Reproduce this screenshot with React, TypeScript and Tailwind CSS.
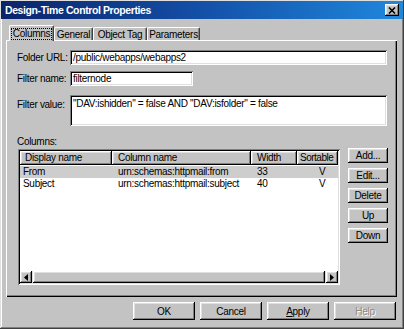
import React from "react";

// classic 3D edges
const raised =
  "shadow-[inset_-1px_-1px_#000,inset_1px_1px_#fff,inset_-2px_-2px_#808080,inset_2px_2px_#dfdfdf]";
const sunken =
  "shadow-[inset_1px_1px_#808080,inset_-1px_-1px_#fff,inset_2px_2px_#000,inset_-2px_-2px_#dfdfdf]";

const rows = [
  { display: "From", column: "urn:schemas:httpmail:from", width: "33", sortable: "V" },
  { display: "Subject", column: "urn:schemas:httpmail:subject", width: "40", sortable: "V" },
];

const headers = [
  { label: "Display name", pad: "pl-[5px]" },
  { label: "Column name", pad: "pl-[6px]" },
  { label: "Width", pad: "pl-[6px]" },
  { label: "Sortable", pad: "pl-[3px] tracking-[-0.5px]" },
];

const Tab: React.FC<{ label: string; w: string; active?: boolean }> = ({ label, w, active }) => (
  <div
    className={
      active
        ? `${w} h-[16px] -mb-[1px] bg-[#c3c3c3] border-l border-t border-white border-r border-r-[#404040] rounded-t-[2px] shadow-[inset_-1px_0_#808080] flex items-center justify-center`
        : `${w} h-[13px] bg-[#c3c3c3] border-l border-t border-white border-r border-r-[#404040] rounded-t-[2px] shadow-[inset_-1px_0_#808080] flex items-center justify-center`
    }
  >
    {active ? (
      <span className="border border-dotted border-black px-[1px] h-[12px] leading-[10px] flex items-center whitespace-nowrap">
        {label}
      </span>
    ) : (
      <span className="leading-[11px] whitespace-nowrap">{label}</span>
    )}
  </div>
);

const Button: React.FC<{ children: React.ReactNode; className?: string; disabled?: boolean }> = ({
  children,
  className,
  disabled,
}) => (
  <div
    className={`${raised} bg-[#c3c3c3] flex items-center justify-center ${className ?? ""} ${
      disabled ? "text-[#8a8a8a] [text-shadow:1px_1px_0_#fff]" : "text-black"
    }`}
  >
    {children}
  </div>
);

const Arrow: React.FC<{ dir: "left" | "right" }> = ({ dir }) => (
  <svg width="4" height="7" viewBox="0 0 4 7">
    {dir === "left" ? <polygon points="4,0 4,7 0,3.5" fill="#000" /> : <polygon points="0,0 0,7 4,3.5" fill="#000" />}
  </svg>
);

const ListView: React.FC = () => (
  <div className={`w-[322px] h-[136px] bg-white ${sunken} p-[2px] flex flex-col`}>
    {/* Header */}
    <div className="grid grid-cols-[92px_139px_46px_41px] h-[14px]">
      {headers.map((h) => (
        <div key={h.label} className={`${raised} bg-[#c3c3c3] leading-[14px] whitespace-nowrap ${h.pad}`}>
          {h.label}
        </div>
      ))}
    </div>

    {/* Rows */}
    <div className="flex-1 pt-[1px]">
      {rows.map((r, i) => (
        <div
          key={r.display}
          className={`grid grid-cols-[92px_139px_46px_41px] h-[12px] leading-[12px] ${
            i === 0 ? "bg-[#cdcdcd]" : ""
          }`}
        >
          <div className="pl-[3px]">{r.display}</div>
          <div className="pl-[6px] whitespace-nowrap">{r.column}</div>
          <div className="pl-[6px]">{r.width}</div>
          <div className="pl-[22px]">{r.sortable}</div>
        </div>
      ))}
    </div>

    {/* Horizontal scrollbar */}
    <div className="h-[12px] flex bg-[#dcdcdc]">
      <div className={`w-[12px] ${raised} bg-[#c3c3c3] flex items-center justify-center`}>
        <Arrow dir="left" />
      </div>
      <div className={`flex-1 ${raised} bg-[#c3c3c3] mx-[1px]`} />
      <div className={`w-[12px] ${raised} bg-[#c3c3c3] flex items-center justify-center`}>
        <Arrow dir="right" />
      </div>
    </div>
  </div>
);

export default function App() {
  return (
    <div
      className={`w-[404px] h-[329px] bg-[#c3c3c3] flex flex-col pt-[1px] px-[1px] font-['Liberation_Sans',Arial,sans-serif] text-[10px] tracking-[-0.3px] text-black shadow-[inset_-1px_-1px_#404040,inset_1px_1px_#dfdfdf,inset_-2px_-2px_#808080,inset_2px_2px_#fff]`}
    >
      {/* Title bar */}
      <div className="h-[18px] flex items-center justify-between pl-[4px] pr-[4px] bg-linear-to-r from-[#0a246a] via-[#1450a8] to-[#2088dc]">
        <span className="text-white font-bold text-[10.5px] tracking-[-0.4px] leading-[18px]">
          Design-Time Control Properties
        </span>
        <div className={`w-[14px] h-[12px] ${raised} bg-[#c3c3c3] flex items-center justify-center`}>
          <svg width="8" height="7" viewBox="0 0 8 7">
            <path d="M1 0.5 L7 6.5 M7 0.5 L1 6.5" stroke="#000" strokeWidth="1.6" />
          </svg>
        </div>
      </div>

      {/* Tabs */}
      <div className="flex items-end h-[15px] mt-[6px] pl-[8px] relative z-10">
        <Tab label="Columns" w="w-[45px]" active />
        <Tab label="General" w="w-[39px]" />
        <Tab label="Object Tag" w="w-[54px]" />
        <Tab label="Parameters" w="w-[53px]" />
      </div>

      {/* Tab page */}
      <div className="ml-[5px] w-[391px] h-[257px] shadow-[inset_1px_1px_#fff,inset_-1px_-1px_#000,inset_-2px_-2px_#808080] flex flex-col pl-[11px] pt-[10px]">
        <div className="flex items-center h-[15px]">
          <div className="w-[53px] whitespace-nowrap">Folder URL:</div>
          <div className={`w-[317px] h-[15px] bg-white ${sunken} pl-[3px] leading-[15px]`}>/public/webapps/webapps2</div>
        </div>

        <div className="flex items-center h-[15px] mt-[6px]">
          <div className="w-[53px] whitespace-nowrap">Filter name:</div>
          <div className={`w-[123px] h-[15px] bg-white ${sunken} pl-[3px] leading-[15px]`}>filternode</div>
        </div>

        <div className="flex items-start mt-[9px]">
          <div className="w-[53px] pt-[2px] whitespace-nowrap">Filter value:</div>
          <div className={`w-[317px] h-[31px] bg-white ${sunken} pl-[3px] pt-[3px] leading-[12px]`}>
            "DAV:ishidden" = false AND "DAV:isfolder" = false
          </div>
        </div>

        <div className="flex items-start mt-[9px]">
          <div className="flex flex-col">
            <div className="h-[13px] leading-[13px]">Columns:</div>
            <div className="ml-[1px] mt-[1px]">
              <ListView />
            </div>
          </div>
          <div className="ml-[8px] mt-[13px] flex flex-col gap-[5px]">
            <Button className="w-[40px] h-[15px]">Add...</Button>
            <Button className="w-[40px] h-[15px]">Edit...</Button>
            <Button className="w-[40px] h-[15px]">Delete</Button>
            <Button className="w-[40px] h-[15px]">Up</Button>
            <Button className="w-[40px] h-[15px]">Down</Button>
          </div>
        </div>
      </div>

      {/* Dialog buttons */}
      <div className="flex justify-end gap-[5px] mt-[5px] pr-[7px]">
        <Button className="w-[62px] h-[18px]">OK</Button>
        <Button className="w-[62px] h-[18px]">Cancel</Button>
        <Button className="w-[62px] h-[18px]">
          <span>
            <span className="underline">A</span>pply
          </span>
        </Button>
        <Button className="w-[62px] h-[18px]" disabled>
          Help
        </Button>
      </div>
    </div>
  );
}
